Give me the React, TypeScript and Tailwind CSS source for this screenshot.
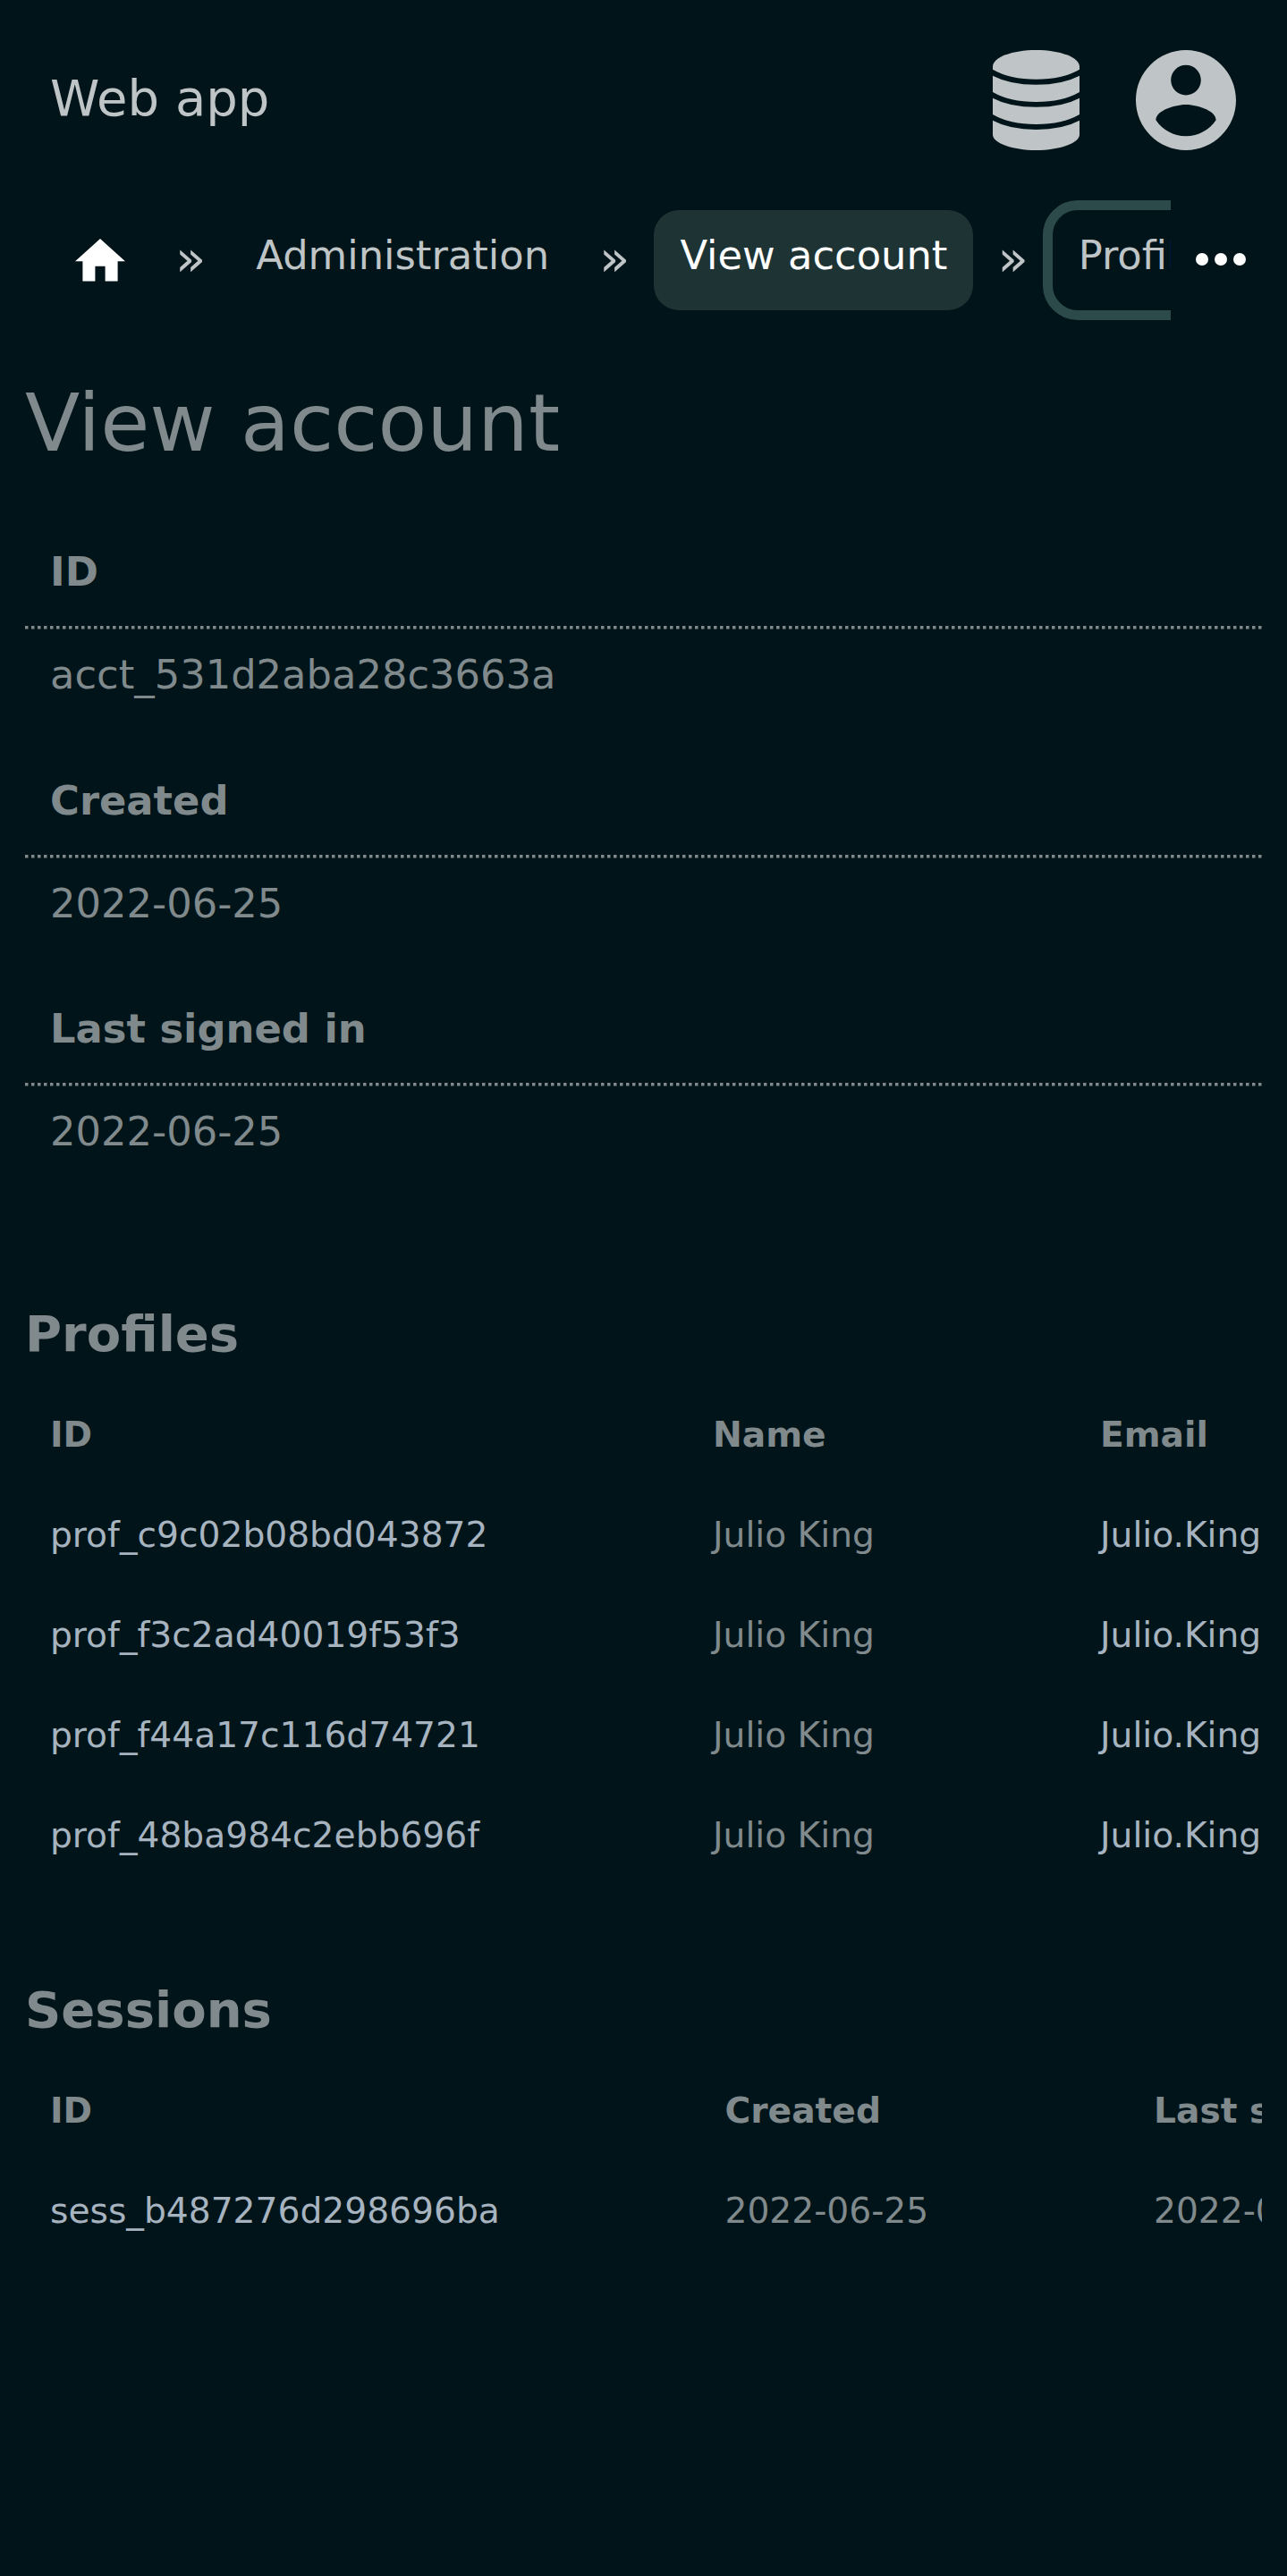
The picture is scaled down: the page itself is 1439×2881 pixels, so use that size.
import type { ReactNode } from "react";

const fields = [
  { label: "ID", value: "acct_531d2aba28c3663a" },
  { label: "Created", value: "2022-06-25" },
  { label: "Last signed in", value: "2022-06-25" },
];

const profiles = [
  "prof_c9c02b08bd043872",
  "prof_f3c2ad40019f53f3",
  "prof_f44a17c116d74721",
  "prof_48ba984c2ebb696f",
];

function DatabaseIcon() {
  return (
    <svg viewBox="0 0 97 112" className="h-[112px] w-[97px]" fill="currentColor">
      <path d="M0 18.5C0 8 22 0 48.5 0S97 8 97 18.5V21.8Q78 32.8 48.5 32.8T0 21.8Z" />
      <path d="M0 28.7Q19 38.7 48.5 38.7T97 28.7V47Q78 58 48.5 58T0 47Z" />
      <path d="M0 53.7Q19 63.8 48.5 63.8T97 53.7V72Q78 83 48.5 83T0 72Z" />
      <path d="M0 78.8Q19 89 48.5 89T97 78.8V94.5C97 104 75 112 48.5 112S0 104 0 94.5Z" />
    </svg>
  );
}

function AccountIcon() {
  return (
    <svg viewBox="2 2 20 20" className="size-[112px]" fill="currentColor">
      <path d="M12 2C6.48 2 2 6.48 2 12s4.48 10 10 10 10-4.48 10-10S17.52 2 12 2zm0 3c1.66 0 3 1.34 3 3s-1.34 3-3 3-3-1.34-3-3 1.34-3 3-3zm0 14.2c-2.5 0-4.71-1.28-6-3.22.03-1.99 4-3.08 6-3.08 1.99 0 5.97 1.09 6 3.08-1.29 1.94-3.5 3.22-6 3.22z" />
    </svg>
  );
}

function DottedRule() {
  return (
    <svg className="block h-[4px] w-full" stroke="currentColor">
      <line x1="0" y1="1.75" x2="1383" y2="1.75" strokeWidth="3.5" strokeDasharray="3.5 3.5" />
    </svg>
  );
}

function Separator() {
  return (
    <span className="min-w-[88.3px] flex-none text-center text-[56px] leading-[108px]">»</span>
  );
}

function Section({ title, children }: { title: string; children: ReactNode }) {
  return (
    <section className="overflow-hidden">
      <h2 className="h-[113px] text-[56px] leading-[112px] font-bold">{title}</h2>
      {children}
    </section>
  );
}

const row = "grid h-[112px] pl-[28px] text-[39.2px] leading-[112px] whitespace-nowrap";
const profileCols = "grid-cols-[741px_433px_300px]";
const sessionCols = "grid-cols-[754.5px_479.5px_300px]";

export default function App() {
  return (
    <div className="h-[2881px] w-[1439px] overflow-hidden bg-[#001419] font-['DejaVu_Sans',sans-serif] text-[#808a8c]">
      <header className="flex h-[224px] items-center pr-[56px] pl-[56px] text-[#bfc4c6]">
        <span className="mt-[-5px] flex-1 text-[56px] leading-[112px]">Web app</span>
        <div className="flex gap-[63px] pr-[1px]">
          <DatabaseIcon />
          <AccountIcon />
        </div>
      </header>

      <div className="flex h-[134px] text-[#bfc4c6]">
        <nav className="flex w-[1309px] overflow-hidden pt-[10.5px] pl-[56px] text-[44.8px] leading-[102px] whitespace-nowrap">
          <a className="flex h-[112px] w-[113px] shrink-0 pt-[32.5px] pl-[28px] text-white">
            <svg viewBox="2 3 20 17" className="h-[47.6px] w-[56px]" fill="currentColor">
              <path d="M10 20V14H14V20H19V12H22L12 3L2 12H5V20H10Z" />
            </svg>
          </a>
          <Separator />
          <a className="h-[112px] shrink-0 px-[29px]">Administration</a>
          <Separator />
          <a className="h-[112px] shrink-0 rounded-[28px] bg-[#1e3434] pr-[29px] pl-[29px] text-white">
            View account
          </a>
          <Separator />
          <a className="h-[112px] shrink-0 rounded-[28px] px-[29px] outline-[11px] outline-[#2c4a4a] outline-solid">
            Profile
          </a>
        </nav>
        <button className="flex flex-1 pt-[59px] pl-[28px] text-white">
          <svg viewBox="0 0 56 14" className="h-[14px] w-[56px]" fill="currentColor">
            <circle cx="7" cy="7" r="7" />
            <circle cx="28" cy="7" r="7" />
            <circle cx="49" cy="7" r="7" />
          </svg>
        </button>
      </div>

      <main className="px-[28px] pt-[59px]">
        <h1 className="h-[112px] text-[89.6px] leading-[112px]">View account</h1>

        <dl className="mt-[58px]">
          {fields.map((f) => (
            <div key={f.label} className="h-[255.5px] text-[44.8px]">
              <dt className="font-bold">
                <span className="block h-[113px] pl-[28px] leading-[105px]">{f.label}</span>
                <DottedRule />
              </dt>
              <dd className="pl-[28px] leading-[101px]">{f.value}</dd>
            </div>
          ))}
        </dl>

        <div className="mt-[82px]">
          <Section title="Profiles">
            <div className={`${row} ${profileCols} font-bold`}>
              <span>ID</span>
              <span>Name</span>
              <span>Email</span>
            </div>
            {profiles.map((id) => (
              <div key={id} className={`${row} ${profileCols}`}>
                <a className="text-[#a7b4c0]">{id}</a>
                <span>Julio King</span>
                <a className="text-[#a7b4c0]">Julio.King</a>
              </div>
            ))}
          </Section>
        </div>

        <div className="mt-[83px]">
          <Section title="Sessions">
            <div className={`${row} ${sessionCols} font-bold`}>
              <span>ID</span>
              <span>Created</span>
              <span>Last signed in</span>
            </div>
            <div className={`${row} ${sessionCols}`}>
              <a className="text-[#a7b4c0]">sess_b487276d298696ba</a>
              <span>2022-06-25</span>
              <span>2022-06-25</span>
            </div>
          </Section>
        </div>
      </main>
    </div>
  );
}
